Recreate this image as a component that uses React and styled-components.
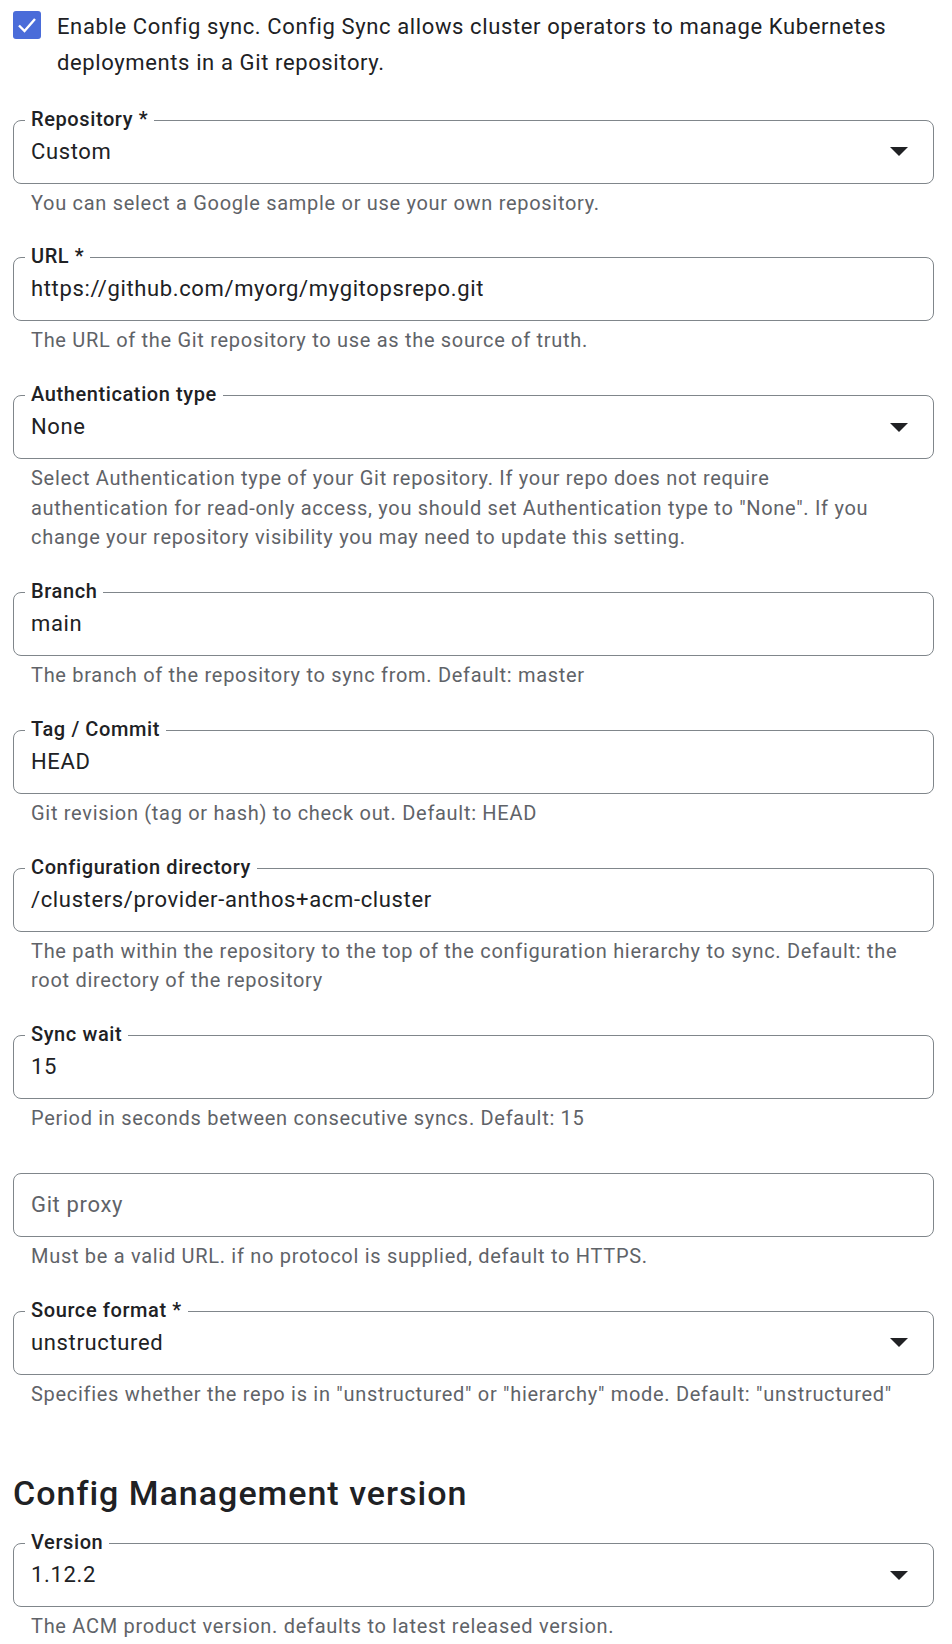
import React from "react";
import styled, { createGlobalStyle } from "styled-components";

const Global = createGlobalStyle`
  html, body { margin: 0; padding: 0; background: #fff; }
  body { font-family: Roboto, "Noto Sans", Arial, sans-serif; color: #202124; }
  * { box-sizing: border-box; }
`;

const Page = styled.div`
  width: 952px;
  padding: 9px 18px 0 13px;
  display: flex;
  flex-direction: column;
  gap: 39.5px;
`;

const CheckRow = styled.label`
  display: flex;
  align-items: flex-start;
  gap: 16px;
`;

const CheckBox = styled.span`
  flex: none;
  width: 28px;
  height: 28px;
  margin-top: 2px;
  border-radius: 3px;
  background: #4a6cd9;
  display: flex;
  align-items: center;
  justify-content: center;
`;

const CheckText = styled.span`
  font-size: 22px;
  line-height: 35.5px;
  letter-spacing: 0.62px;
  color: #202124;
`;

const Field = styled.div`
  display: flex;
  flex-direction: column;
`;

const Box = styled.div`
  position: relative;
  height: 64px;
  border: 1px solid #80868b;
  border-radius: 8px;
  display: flex;
  align-items: center;
  padding: 0 25px 0 17px;
`;

const Label = styled.span`
  position: absolute;
  top: -13px;
  left: 11px;
  padding: 0 6px;
  background: #fff;
  font-size: 20px;
  line-height: 22px;
  font-weight: 500;
  letter-spacing: 0.6px;
  color: #202124;
  white-space: nowrap;
`;

const Value = styled.span`
  flex: 1;
  font-size: 22px;
  line-height: 26px;
  letter-spacing: 0.64px;
  color: ${(p) => (p.$placeholder ? "#5f6368" : "#202124")};
  white-space: nowrap;
`;

const Arrow = styled.svg`
  flex: none;
  width: 18px;
  height: 9px;
`;

const Helper = styled.div`
  margin-top: 5px;
  padding: 0 18px;
  font-size: 20px;
  line-height: 29.4px;
  letter-spacing: 0.7px;
  color: #5f6368;
`;

const Heading = styled.h2`
  margin: 26px 0 -7px;
  font-size: 34px;
  line-height: 36px;
  font-weight: 500;
  letter-spacing: 1px;
  color: #202124;
`;

const TextField = ({ label, value, placeholder, select, helper }) => (
  <Field>
    <Box>
      {label && <Label>{label}</Label>}
      <Value $placeholder={!value}>{value || placeholder}</Value>
      {select && (
        <Arrow viewBox="0 0 18 9">
          <polygon points="0,0 18,0 9,9" fill="#202124" />
        </Arrow>
      )}
    </Box>
    <Helper>{helper}</Helper>
  </Field>
);

export default function App() {
  return (
    <>
      <Global />
      <Page>
        <CheckRow>
          <CheckBox>
            <svg width="20" height="16" viewBox="0 0 20 16">
              <polyline
                points="2,8.5 7.5,14 18,2"
                fill="none"
                stroke="#fff"
                strokeWidth="2.4"
              />
            </svg>
          </CheckBox>
          <CheckText>
            Enable Config sync. Config Sync allows cluster operators to manage
            Kubernetes deployments in a Git repository.
          </CheckText>
        </CheckRow>

        <TextField
          label="Repository *"
          value="Custom"
          select
          helper="You can select a Google sample or use your own repository."
        />
        <TextField
          label="URL *"
          value="https://github.com/myorg/mygitopsrepo.git"
          helper="The URL of the Git repository to use as the source of truth."
        />
        <TextField
          label="Authentication type"
          value="None"
          select
          helper={
            <>
              Select Authentication type of your Git repository. If your repo does not require
              <br />
              authentication for read-only access, you should set Authentication type to "None". If you
              <br />
              change your repository visibility you may need to update this setting.
            </>
          }
        />
        <TextField
          label="Branch"
          value="main"
          helper="The branch of the repository to sync from. Default: master"
        />
        <TextField
          label="Tag / Commit"
          value="HEAD"
          helper="Git revision (tag or hash) to check out. Default: HEAD"
        />
        <TextField
          label="Configuration directory"
          value="/clusters/provider-anthos+acm-cluster"
          helper={
            <>
              The path within the repository to the top of the configuration hierarchy to sync. Default: the
              <br />
              root directory of the repository
            </>
          }
        />
        <TextField
          label="Sync wait"
          value="15"
          helper="Period in seconds between consecutive syncs. Default: 15"
        />
        <TextField
          placeholder="Git proxy"
          helper="Must be a valid URL. if no protocol is supplied, default to HTTPS."
        />
        <TextField
          label="Source format *"
          value="unstructured"
          select
          helper={'Specifies whether the repo is in "unstructured" or "hierarchy" mode. Default: "unstructured"'}
        />

        <Heading>Config Management version</Heading>

        <TextField
          label="Version"
          value="1.12.2"
          select
          helper="The ACM product version. defaults to latest released version."
        />
      </Page>
    </>
  );
}
